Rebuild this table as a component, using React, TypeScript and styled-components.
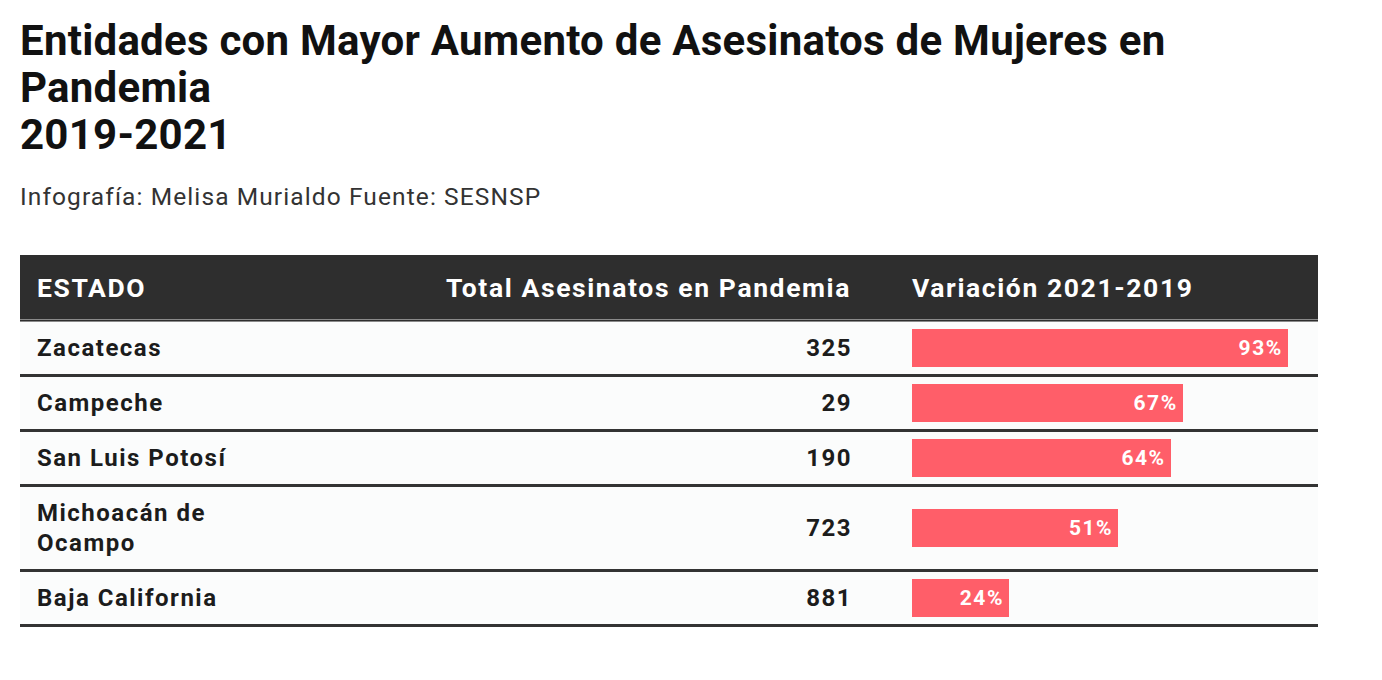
import styled, { createGlobalStyle } from 'styled-components'
import { FC } from 'react'

interface Entry {
  estado: string
  total: number
  variacion: number
}

const DATA: Entry[] = [
  { estado: 'Zacatecas', total: 325, variacion: 93 },
  { estado: 'Campeche', total: 29, variacion: 67 },
  { estado: 'San Luis Potosí', total: 190, variacion: 64 },
  { estado: 'Michoacán de Ocampo', total: 723, variacion: 51 },
  { estado: 'Baja California', total: 881, variacion: 24 },
]

const BAR_SCALE = 404 // px that stand for 100%

const GlobalStyle = createGlobalStyle`
  body {
    margin: 0;
    background: #fff;
    font-family: Roboto, "Liberation Sans", sans-serif;
    color: #1a1a1a;
  }
`

const App: FC = () => (
  <>
    <GlobalStyle />
    <Page>
      <Title>
        Entidades con Mayor Aumento de Asesinatos de Mujeres en Pandemia
        <br />
        2019-2021
      </Title>
      <Credits>Infografía: Melisa Murialdo Fuente: SESNSP</Credits>

      <Table>
        <HeadRow>
          <HeadCell>ESTADO</HeadCell>
          <HeadCell align="right">Total Asesinatos en Pandemia</HeadCell>
          <HeadCell>Variación 2021-2019</HeadCell>
        </HeadRow>
        {DATA.map((row) => (
          <Row key={row.estado}>
            <NameCell>{row.estado}</NameCell>
            <NumberCell>{row.total}</NumberCell>
            <BarCell>
              <Bar style={{ width: (row.variacion / 100) * BAR_SCALE }}>
                {row.variacion}%
              </Bar>
            </BarCell>
          </Row>
        ))}
      </Table>
    </Page>
  </>
)

const Page = styled.div`
  padding: 17px 20px 40px;
  width: 1298px;
`
const Title = styled.h1`
  margin: 0;
  width: 1200px;
  font-size: 42px;
  line-height: 47px;
  letter-spacing: 0.25px;
  font-weight: 700;
  color: #111;
`
const Credits = styled.p`
  margin: 24px 0 0;
  font-size: 24.5px;
  line-height: 30px;
  letter-spacing: 1.1px;
  color: #333;
`
const Table = styled.div`
  margin-top: 43px;
  display: flex;
  flex-direction: column;
`
const HeadRow = styled.div`
  display: grid;
  grid-template-columns: 240px 1fr 406px;
  height: 64px;
  align-items: center;
  background: #2e2e2e;
  border-bottom: 3px double #8a8a8a;
`
const HeadCell = styled.div<{ align?: 'left' | 'right' }>`
  color: #fff;
  font-size: 26.5px;
  letter-spacing: 1.6px;
  font-weight: 700;
  white-space: nowrap;
  text-align: ${(p) => p.align || 'left'};
  &:first-child {
    padding-left: 17px;
  }
  &:nth-child(2) {
    padding-right: 61px;
  }
`
const Row = styled.div`
  display: grid;
  grid-template-columns: 240px 1fr 406px;
  align-items: center;
  background: #fbfcfc;
  border-bottom: 3px solid #333;
`
const NameCell = styled.div`
  padding: 11px 16px 11px 17px;
  font-size: 24px;
  line-height: 30px;
  letter-spacing: 1.5px;
  font-weight: 700;
  color: #1c1c1c;
`
const NumberCell = styled(NameCell)`
  padding: 11px 60px 11px 0;
  text-align: right;
`
const BarCell = styled.div`
  display: flex;
  align-items: center;
`
const Bar = styled.div`
  height: 38px;
  box-sizing: border-box;
  background: #ff5e69;
  color: #fff;
  font-size: 21px;
  letter-spacing: 1.5px;
  font-weight: 700;
  display: flex;
  align-items: center;
  justify-content: flex-end;
  padding-right: 5px;
`

export default App
